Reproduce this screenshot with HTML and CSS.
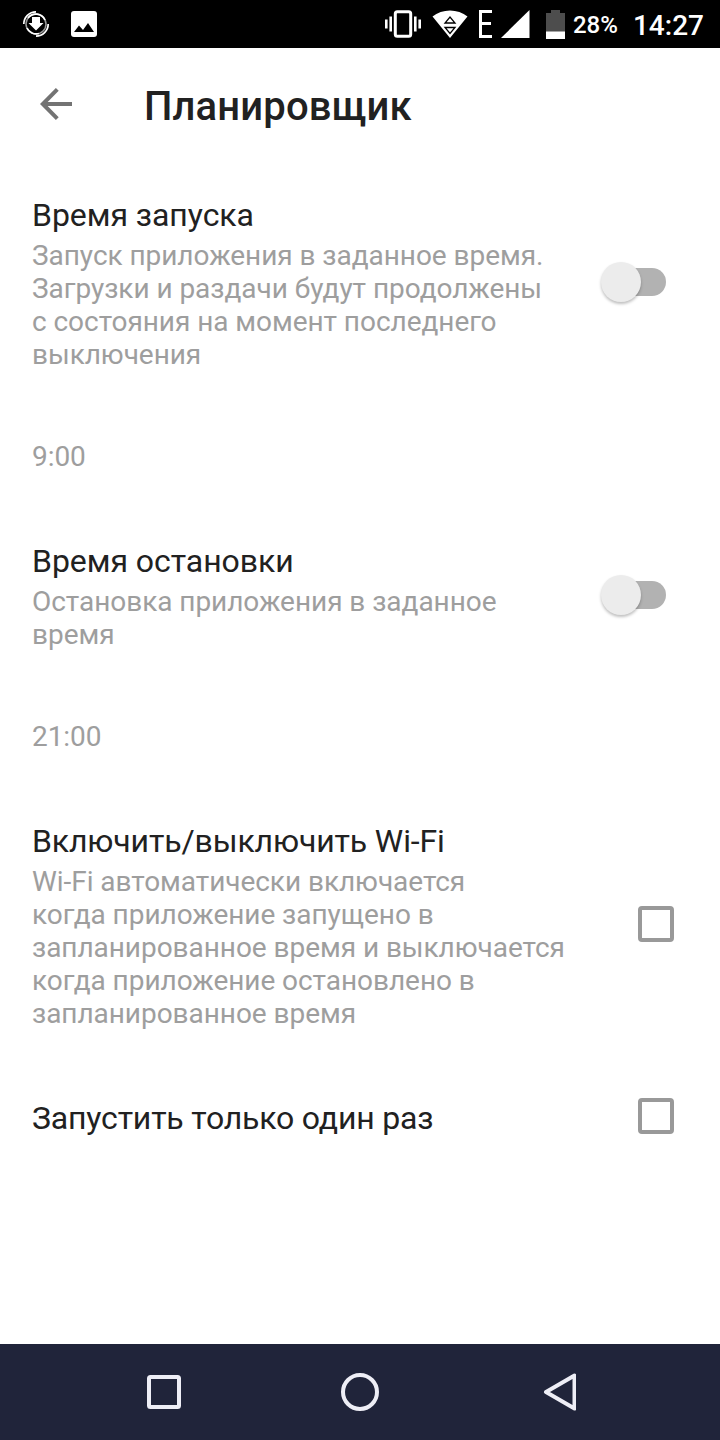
FILE: index.html
```html
<!DOCTYPE html>
<html lang="ru">
<head>
    <meta charset="UTF-8">
    <meta name="viewport" content="width=device-width, initial-scale=1.0">
    <title>Планировщик</title>
    <link rel="stylesheet" href="styles.css">
</head>
<body>
    <div class="status-bar">
        <div class="status-left">
            <svg width="28" height="28" viewBox="0 0 28 28" fill="none">
                <circle cx="14" cy="14" r="10" stroke="#fff" stroke-width="1.5" opacity=".6"/>
                <path d="M1.800 14A12.200 12.200 0 0 1 14 1.800M26.200 14A12.200 12.200 0 0 1 14 26.200" stroke="#fff" stroke-width="1.700"/>
                <path d="M6 8A10 10 0 0 1 23 10M5 18A10 10 0 0 0 17 23.500" stroke="#fff" stroke-width="1.700"/>
                <path d="M10 7h8v6h3.500L14 20.500 6.500 13H10z" fill="#fff"/>
            </svg>
            <svg width="26" height="26" viewBox="0 0 26 26">
                <rect width="26" height="26" rx="3" fill="#fff"/>
                <path d="M3 21l5-6.500 4 4.500 5-7 6 9z" fill="#000"/>
            </svg>
        </div>
        <div class="status-right">
            <svg class="vibrate" width="36" height="28" viewBox="0 0 36 28" fill="none" stroke="#fff">
                <rect x="10.300" y="1.700" width="15.400" height="24.600" rx="2" stroke-width="3"/>
                <path d="M1.300 9.500v9M34.700 9.500v9M5.700 6.500v15M30.300 6.500v15" stroke-width="2.600"/>
            </svg>
            <svg class="wifi" width="36" height="28" viewBox="0 0 36 28">
                <path d="M18 28L.5 6.500C10-1.500 26-1.500 35.500 6.500z" fill="#fff"/>
                <path d="M13 13h10l-5-6zM13 17.500h10l-5 6z" fill="#fff" stroke="#000" stroke-width="1.300"/>
            </svg>
            <svg class="edge" width="13" height="28" viewBox="0 0 13 28">
                <path d="M13 1.500H1.500v25H13M1.500 13.500H12" fill="none" stroke="#fff" stroke-width="3"/>
            </svg>
            <svg class="signal" width="29" height="28" viewBox="0 0 29 28">
                <path d="M0 28L28.500 0v28z" fill="#fff"/>
            </svg>
            <svg class="battery" width="19" height="29" viewBox="0 0 19 29">
                <path d="M0 3h5V0h9v3h5v19H0z" fill="#4d4d4d"/>
                <path d="M0 21.500h19V29H0z" fill="#fff"/>
            </svg>
            <span class="percent">28%</span>
            <span class="clock">14:27</span>
        </div>
    </div>

    <div class="app-bar">
        <svg width="32" height="32" viewBox="0 0 32 32" fill="none" stroke="#737373" stroke-width="4">
            <path d="M32 16H4M17.300 1.400L2.800 16l14.500 14.600"/>
        </svg>
        <h1 class="page-title">Планировщик</h1>
    </div>

    <div class="settings">
        <div class="setting">
            <div class="setting-text">
                <div class="setting-title">Время запуска</div>
                <div class="summary">Запуск приложения в заданное время.<br>Загрузки и раздачи будут продолжены<br>с состояния на момент последнего<br>выключения</div>
            </div>
            <div class="switch"><div class="knob"></div></div>
        </div>
        <div class="setting">
            <div class="summary">9:00</div>
        </div>
        <div class="setting">
            <div class="setting-text">
                <div class="setting-title">Время остановки</div>
                <div class="summary">Остановка приложения в заданное<br>время</div>
            </div>
            <div class="switch"><div class="knob"></div></div>
        </div>
        <div class="setting">
            <div class="summary">21:00</div>
        </div>
        <div class="setting wifi-setting">
            <div class="setting-text">
                <div class="setting-title">Включить/выключить Wi-Fi</div>
                <div class="summary">Wi-Fi автоматически включается<br>когда приложение запущено в<br>запланированное время и выключается<br>когда приложение остановлено в<br>запланированное время</div>
            </div>
            <div class="checkbox"></div>
        </div>
        <div class="setting once-setting">
            <div class="setting-title">Запустить только один раз</div>
            <div class="checkbox"></div>
        </div>
    </div>

    <div class="nav-bar">
        <svg width="40" height="40" viewBox="0 0 40 40"><rect x="5" y="5" width="30" height="30" rx="1.500"/></svg>
        <svg width="40" height="40" viewBox="0 0 40 40"><circle cx="20" cy="20" r="17"/></svg>
        <svg width="40" height="40" viewBox="0 0 40 40"><path d="M38.500 3.500v33L10 20z"/></svg>
    </div>
</body>
</html>
```

FILE: styles.css
```css
* {
    margin: 0;
    padding: 0;
    box-sizing: border-box;
}
body {
    display: flex;
    flex-direction: column;
    height: 1440px;
    background: #ffffff;
    font-family: Roboto, "Noto Sans", sans-serif;
    color: #212121;
}
svg {
    display: block;
    flex-shrink: 0;
}
.status-bar {
    display: flex;
    justify-content: space-between;
    height: 48px;
    padding: 0 16px 0 22px;
    background: #000000;
    color: #ffffff;
}
.status-left {
    display: flex;
    align-items: center;
    gap: 21px;
}
.status-right {
    display: flex;
    align-items: center;
}
.wifi {
    margin-left: 11px;
}
.edge {
    margin-left: 11px;
}
.signal {
    margin-left: 9px;
}
.battery {
    margin-left: 16px;
}
.percent {
    width: 60px;
    margin-left: 8px;
    padding-top: 2px;
    font-size: 24px;
    font-weight: 500;
    line-height: 48px;
}
.clock {
    padding-top: 3px;
    font-size: 28px;
    font-weight: 500;
    line-height: 48px;
}
.app-bar {
    display: flex;
    align-items: center;
    gap: 72px;
    height: 112px;
    padding-left: 40px;
}
.page-title {
    padding-top: 5px;
    font-size: 40px;
    font-weight: 500;
    letter-spacing: 0.15px;
}
.settings {
    flex: 1;
    padding-top: 4px;
}
.setting {
    display: flex;
    justify-content: space-between;
    align-items: center;
    padding: 32px 46px 37px 32px;
}
.setting-title {
    font-size: 32px;
    line-height: 38px;
    letter-spacing: -0.05px;
    white-space: nowrap;
}
.setting-title + .summary {
    margin-top: 5px;
}
.wifi-setting {
    padding-bottom: 36px;
}
.wifi-setting .setting-title {
    letter-spacing: -0.13px;
}
.once-setting .setting-title {
    letter-spacing: -0.18px;
}
.summary {
    font-size: 28px;
    line-height: 33px;
    letter-spacing: -0.05px;
    color: #9e9e9e;
    white-space: nowrap;
}
.switch {
    display: flex;
    align-items: center;
    width: 60px;
    height: 28px;
    margin-right: 8px;
    margin-bottom: 3px;
    border-radius: 14px;
    background: #b2b2b2;
}
.knob {
    flex-shrink: 0;
    width: 40px;
    height: 40px;
    margin-left: -5px;
    border-radius: 50%;
    background: #ececec;
    box-shadow: 0 2px 3px rgba(0, 0, 0, 0.25);
}
.checkbox {
    width: 36px;
    height: 36px;
    margin-bottom: 4px;
    border: 4px solid #999999;
    border-radius: 4px;
}
.nav-bar {
    display: flex;
    justify-content: center;
    align-items: center;
    gap: 156px;
    height: 96px;
    background: #20243a;
}
.nav-bar svg {
    fill: none;
    stroke: #eeeef6;
    stroke-width: 4;
    stroke-linejoin: round;
}
```
